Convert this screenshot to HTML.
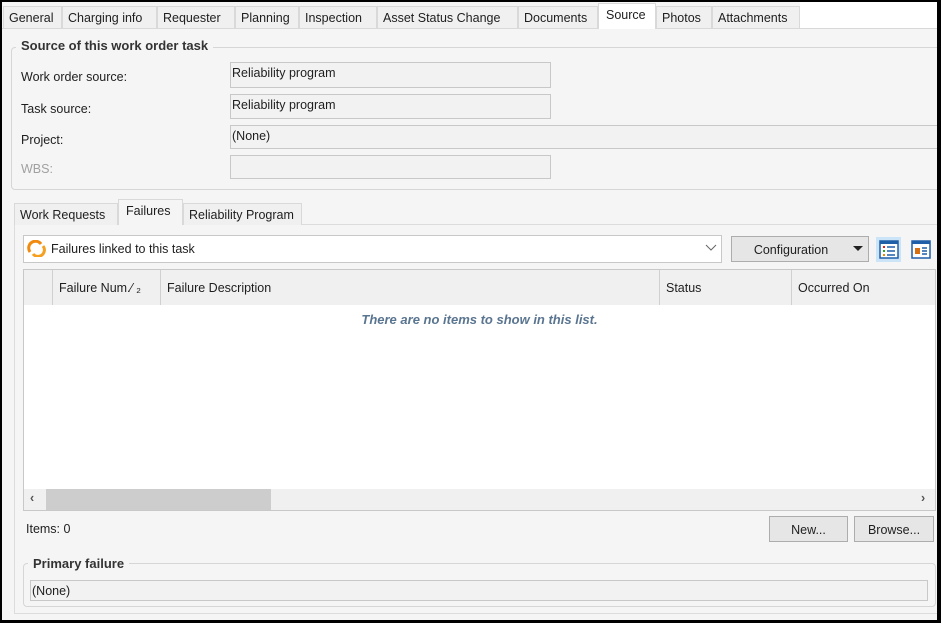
<!DOCTYPE html>
<html><head><meta charset="utf-8"><style>
*{box-sizing:border-box;margin:0;padding:0}
body{width:941px;height:623px;background:#000;position:relative;overflow:hidden;font-family:"Liberation Sans",sans-serif;font-size:12.5px;color:#1e1e1e}
.a{position:absolute}
#page{left:2px;top:2px;width:935px;height:618px;background:#f5f5f5}
.tab{position:absolute;top:6px;height:22px;background:#f0f0f0;border:1px solid #d9d9d9;border-bottom:none;padding:4px 0 0 5px;white-space:nowrap}
.tab.sel{top:3px;height:26px;background:#fff;padding-top:4px}
.inp{position:absolute;background:#f2f2f2;border:1px solid #c8c8c8;padding:3px 0 0 1px}
.lbl{position:absolute;left:21px}
.btn{position:absolute;background:#e6e6e6;border:1px solid #adadad;text-align:center;padding-top:6px}
.col{position:absolute;top:0;height:35px;border-left:1px solid #d0d0d0;padding:11px 0 0 6px}
</style></head><body>
<div id="page" class="a"></div>
<div class="a" style="left:800px;top:2px;width:137px;height:26px;background:#fff"></div>
<div class="a" style="left:2px;top:28px;width:935px;height:1px;background:#d9d9d9"></div>
<div class="tab" style="left:3px;width:59px">General</div>
<div class="tab" style="left:62px;width:95px">Charging info</div>
<div class="tab" style="left:157px;width:78px">Requester</div>
<div class="tab" style="left:235px;width:64px">Planning</div>
<div class="tab" style="left:299px;width:78px">Inspection</div>
<div class="tab" style="left:377px;width:141px">Asset Status Change</div>
<div class="tab" style="left:518px;width:80px">Documents</div>
<div class="tab sel" style="left:598px;width:58px;padding-left:7px">Source</div>
<div class="tab" style="left:656px;width:56px">Photos</div>
<div class="tab" style="left:712px;width:88px">Attachments</div>

<div class="a" style="left:11px;top:47px;width:940px;height:143px;border:1px solid #d6d6d6;border-radius:4px"></div>
<div class="a" style="left:16px;top:38px;background:#f5f5f5;padding:0 5px;font-weight:bold;font-size:13px;color:#333">Source of this work order task</div>
<div class="lbl" style="top:70px">Work order source:</div>
<div class="lbl" style="top:102px">Task source:</div>
<div class="lbl" style="top:133px">Project:</div>
<div class="lbl" style="top:162px;color:#a0a0a0">WBS:</div>
<div class="inp" style="left:230px;top:62px;width:321px;height:26px">Reliability program</div>
<div class="inp" style="left:230px;top:94px;width:321px;height:25px">Reliability program</div>
<div class="inp" style="left:230px;top:125px;width:720px;height:24px">(None)</div>
<div class="inp" style="left:230px;top:155px;width:321px;height:24px"></div>

<div class="a" style="left:14px;top:224px;width:923px;height:390px;border:1px solid #dcdcdc;border-right:none"></div>
<div class="tab" style="left:14px;top:203px;width:104px">Work Requests</div>
<div class="tab sel" style="left:118px;top:199px;width:65px;background:#f5f5f5;padding-left:7px">Failures</div>
<div class="tab" style="left:183px;top:203px;width:119px">Reliability Program</div>

<div class="a" style="left:23px;top:235px;width:699px;height:28px;background:#fff;border:1px solid #c8c8c8;padding:6px 0 0 27px">Failures linked to this task</div>
<svg class="a" style="left:27px;top:240px" width="20" height="17" viewBox="0 0 20 17"><path d="M3 12 A6 6 0 0 1 14 4" stroke="#f08a10" stroke-width="3" fill="none"/><path d="M16 6 A6 6 0 0 1 6 14" stroke="#f5a020" stroke-width="3" fill="none"/></svg>
<svg class="a" style="left:705px;top:244px" width="12" height="8"><path d="M1 1 L6 6 L11 1" stroke="#666" fill="none"/></svg>
<div class="btn" style="left:731px;top:236px;width:138px;height:26px;padding-right:18px">Configuration</div>
<svg class="a" style="left:853px;top:246px" width="10" height="6"><path d="M0 0 L10 0 L5 5Z" fill="#222"/></svg>
<div class="a" style="left:876px;top:237px;width:25px;height:25px;background:#cce4f7"></div>
<svg class="a" style="left:879px;top:240px" width="20" height="19"><rect x="1" y="1" width="18" height="17" fill="#fff" stroke="#1f5fa8" stroke-width="1.5"/><rect x="1" y="1" width="18" height="3" fill="#1f5fa8"/><rect x="4" y="6" width="2" height="2" fill="#d22"/><rect x="4" y="10" width="2" height="2" fill="#2a2"/><rect x="4" y="14" width="2" height="2" fill="#e80"/><path d="M8 7H16M8 11H16M8 15H16" stroke="#1f5fa8" stroke-width="1.5"/></svg>
<svg class="a" style="left:911px;top:240px" width="20" height="19"><rect x="1" y="1" width="18" height="17" fill="#fff" stroke="#1f5fa8" stroke-width="1.5"/><rect x="1" y="1" width="18" height="3" fill="#1f5fa8"/><rect x="4" y="8" width="5" height="6" fill="#d97010"/><path d="M11 8H16M11 11H16M11 14H16" stroke="#1f5fa8" stroke-width="1.5"/></svg>

<div class="a" style="left:23px;top:269px;width:913px;height:242px;background:#fff;border:1px solid #c8c8c8;overflow:hidden">
 <div class="a" style="left:0;top:0;width:913px;height:35px;background:#f0f0f0"></div>
 <div class="col" style="left:28px;width:108px">Failure Num.⁄ ₂</div>
 <div class="col" style="left:136px;width:500px">Failure Description</div>
 <div class="col" style="left:635px;width:132px">Status</div>
 <div class="col" style="left:767px;width:146px">Occurred On</div>
 <div class="a" style="left:0;top:42px;width:911px;text-align:center;font-style:italic;font-weight:bold;color:#5a7590;font-size:13px">There are no items to show in this list.</div>
 <div class="a" style="left:0;top:219px;width:911px;height:21px;background:#f0f0f0"></div>
 <div class="a" style="left:22px;top:219px;width:225px;height:21px;background:#cdcdcd"></div>
 <div class="a" style="left:6px;top:221px;color:#555;font-weight:bold">‹</div>
 <div class="a" style="left:897px;top:221px;color:#555;font-weight:bold">›</div>
</div>
<div class="a" style="left:26px;top:522px">Items: 0</div>
<div class="btn" style="left:769px;top:516px;width:79px;height:26px">New...</div>
<div class="btn" style="left:854px;top:516px;width:80px;height:26px">Browse...</div>

<div class="a" style="left:23px;top:563px;width:913px;height:44px;border:1px solid #d6d6d6;border-radius:4px"></div>
<div class="a" style="left:28px;top:556px;background:#f5f5f5;padding:0 5px;font-weight:bold;font-size:13px;color:#333">Primary failure</div>
<div class="inp" style="left:30px;top:580px;width:898px;height:21px;padding-top:3px">(None)</div>
<div class="a" style="left:937px;top:0;width:4px;height:623px;background:#000"></div>
<div class="a" style="left:0;top:620px;width:941px;height:3px;background:#000"></div>
</body></html>
